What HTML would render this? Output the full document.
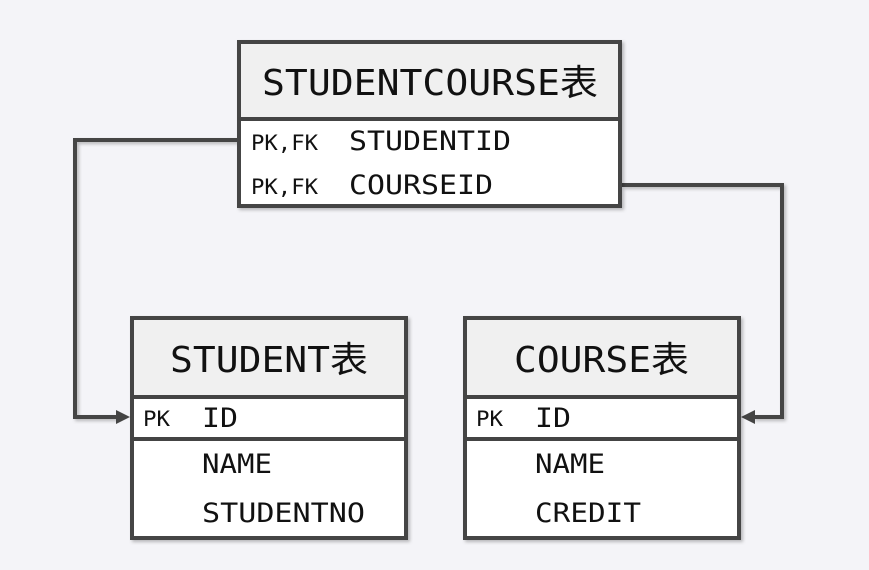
<!DOCTYPE html>
<html><head><meta charset="utf-8"><style>
html,body{margin:0;padding:0;background:#f4f4f8;}
svg{display:block}
text{font-family:"DejaVu Sans Mono","Liberation Mono","Noto Sans CJK SC",monospace;fill:#111}
</style></head><body>
<svg width="869" height="570" viewBox="0 0 869 570" xmlns="http://www.w3.org/2000/svg">
<defs><filter id="sh" x="-5%" y="-5%" width="115%" height="115%"><feDropShadow dx="2" dy="2" stdDeviation="1.5" flood-color="#000" flood-opacity="0.25"/></filter></defs>
<g fill="none" stroke="#444" stroke-width="4" filter="url(#sh)">
<path d="M237 140 H75 V417 H118"/>
<path d="M622 185 H782 V417 H753"/>
</g>
<polygon points="130,417 116,410 116,424" fill="#444"/>
<polygon points="741,417 755,410 755,424" fill="#444"/>

<g filter="url(#sh)">
<rect x="239" y="42" width="381" height="164" fill="#fff" stroke="#444" stroke-width="4"/>
</g>
<rect x="241" y="44" width="377" height="74" fill="#f0f0f0"/>
<line x1="238" y1="119" x2="621" y2="119" stroke="#444" stroke-width="4"/>
<text x="262" y="95" font-size="36" textLength="336" lengthAdjust="spacingAndGlyphs">STUDENTCOURSE表</text>
<text x="251" y="150" font-size="21" textLength="67" lengthAdjust="spacingAndGlyphs">PK,FK</text>
<text x="349" y="150" font-size="27" textLength="162" lengthAdjust="spacingAndGlyphs">STUDENTID</text>
<text x="251" y="194" font-size="21" textLength="67" lengthAdjust="spacingAndGlyphs">PK,FK</text>
<text x="349" y="194" font-size="27" textLength="144" lengthAdjust="spacingAndGlyphs">COURSEID</text>

<g filter="url(#sh)">
<rect x="132" y="318" width="274" height="220" fill="#fff" stroke="#444" stroke-width="4"/>
</g>
<rect x="134" y="320" width="270" height="76" fill="#f0f0f0"/>
<line x1="131" y1="397" x2="407" y2="397" stroke="#444" stroke-width="4"/>
<line x1="131" y1="439" x2="407" y2="439" stroke="#444" stroke-width="4"/>
<text x="170" y="372" font-size="36" textLength="198" lengthAdjust="spacingAndGlyphs">STUDENT表</text>
<text x="143" y="426" font-size="21" textLength="27" lengthAdjust="spacingAndGlyphs">PK</text>
<text x="202" y="427" font-size="27" textLength="36" lengthAdjust="spacingAndGlyphs">ID</text>
<text x="202" y="473" font-size="27" textLength="70" lengthAdjust="spacingAndGlyphs">NAME</text>
<text x="202" y="522" font-size="27" textLength="163" lengthAdjust="spacingAndGlyphs">STUDENTNO</text>

<g filter="url(#sh)">
<rect x="465" y="318" width="274" height="220" fill="#fff" stroke="#444" stroke-width="4"/>
</g>
<rect x="467" y="320" width="270" height="76" fill="#f0f0f0"/>
<line x1="464" y1="397" x2="740" y2="397" stroke="#444" stroke-width="4"/>
<line x1="464" y1="439" x2="740" y2="439" stroke="#444" stroke-width="4"/>
<text x="514" y="372" font-size="36" textLength="175" lengthAdjust="spacingAndGlyphs">COURSE表</text>
<text x="476" y="426" font-size="21" textLength="27" lengthAdjust="spacingAndGlyphs">PK</text>
<text x="535" y="427" font-size="27" textLength="36" lengthAdjust="spacingAndGlyphs">ID</text>
<text x="535" y="473" font-size="27" textLength="70" lengthAdjust="spacingAndGlyphs">NAME</text>
<text x="535" y="522" font-size="27" textLength="106" lengthAdjust="spacingAndGlyphs">CREDIT</text>
</svg>
</body></html>
